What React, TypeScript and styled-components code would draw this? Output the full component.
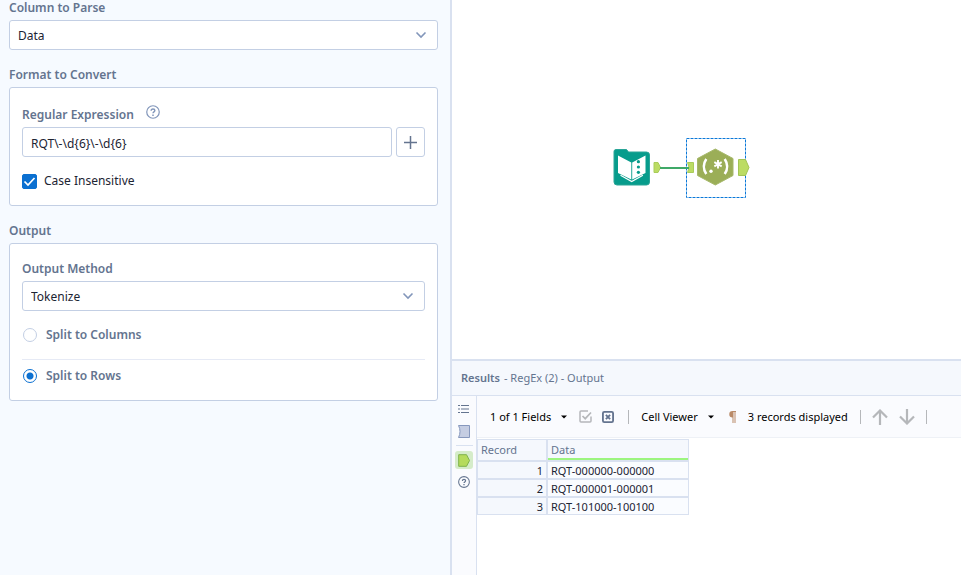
import React, { useState } from "react";
import styled, { createGlobalStyle } from "styled-components";

const Global = createGlobalStyle`
  * { box-sizing: border-box; }
  body {
    margin: 0;
    background: #ffffff;
    color: #1c2433;
    font-family: "Noto Sans", "Open Sans", sans-serif;
    font-size: 12px;
    line-height: 16px;
  }
  button, input, select { font: inherit; color: inherit; }
`;

const Page = styled.div`
  display: grid;
  grid-template-columns: minmax(0, 452fr) minmax(0, 509fr);
  min-height: 100vh;
`;

/* Configuration panel */

const ConfigPanel = styled.aside`
  display: flex;
  flex-direction: column;
  gap: 17px;
  padding: 0 12px 16px 9px;
  background: #f6faff;
  border-right: 2px solid #d9e1f0;
`;

const Section = styled.section`
  display: flex;
  flex-direction: column;
  gap: 4px;
`;

const Title = styled.label`
  color: #64748f;
  font-weight: 600;
`;

const Heading = styled.h2`
  margin: 0;
  color: #64748f;
  font-size: 12px;
  font-weight: 600;
`;

const Card = styled.div`
  display: flex;
  flex-direction: column;
  padding: 17px 12px 16px;
  background: #ffffff;
  border: 1px solid #c3cfe4;
  border-radius: 3px;
`;

const FieldHead = styled.div<{ $withHelp?: boolean }>`
  display: flex;
  align-items: flex-end;
  gap: 12px;
  height: ${(p) => (p.$withHelp ? 18 : 16)}px;
  margin-bottom: 4px;
`;

const HelpButton = styled.button`
  display: flex;
  align-self: flex-start;
  padding: 0;
  border: 0;
  background: none;
  color: #8296ba;
`;

const FieldRow = styled.div`
  display: flex;
  gap: 4px;
`;

const TextInput = styled.input`
  flex: 1;
  min-width: 0;
  height: 30px;
  padding: 2px 8px 0;
  background: #ffffff;
  border: 1px solid #c3cfe4;
  border-radius: 3px;
`;

const AddButton = styled.button`
  display: flex;
  align-items: center;
  justify-content: center;
  width: 29px;
  height: 30px;
  padding: 0;
  background: #ffffff;
  border: 1px solid #c3cfe4;
  border-radius: 3px;
  color: #64748f;
`;

const SelectWrap = styled.div`
  display: grid;
  align-items: center;
  > * { grid-area: 1 / 1; }
  > svg { justify-self: end; margin-right: 11px; pointer-events: none; }
`;

const SelectInput = styled.select`
  appearance: none;
  width: 100%;
  height: 30px;
  padding: 2px 32px 0 8px;
  background: #ffffff;
  border: 1px solid #c3cfe4;
  border-radius: 3px;
`;

const CheckLabel = styled.label`
  display: flex;
  align-items: center;
  gap: 7px;
  margin-top: 16px;
`;

const CheckMark = styled.span`
  display: grid;
  > * { grid-area: 1 / 1; }
  > svg { pointer-events: none; }
`;

const CheckInput = styled.input`
  appearance: none;
  width: 15px;
  height: 15px;
  margin: 0;
  background: #ffffff;
  border: 1px solid #c3cfe4;
  border-radius: 2px;
  &:checked { background: #0b70d1; border-color: #0b70d1; }
`;

const RadioLabel = styled.label`
  display: flex;
  align-items: center;
  gap: 9px;
  padding-left: 1px;
  color: #64748f;
  font-weight: 600;
`;

const RadioInput = styled.input`
  appearance: none;
  width: 14px;
  height: 14px;
  margin: 0;
  background: #ffffff;
  border: 1px solid #c3cfe4;
  border-radius: 50%;
  &:checked {
    border-color: #0b70d1;
    background: radial-gradient(circle, #0b70d1 3px, #ffffff 4px);
  }
`;

const RadioGroup = styled.div`
  display: flex;
  flex-direction: column;
  padding-top: 16px;
`;

const Divider = styled.hr`
  width: 100%;
  height: 1px;
  margin: 16px 0 8px;
  border: 0;
  background: #e6eaf5;
`;

/* Workspace */

const Workspace = styled.main`
  display: grid;
  grid-template-rows: minmax(0, 359fr) minmax(0, 216fr);
  min-width: 0;
`;

const Canvas = styled.div`
  position: relative;
  background: #ffffff;
`;

const ToolNode = styled.div<{ $x: number; $y: number }>`
  position: absolute;
  left: ${(p) => p.$x}px;
  top: ${(p) => p.$y}px;
  > svg { display: block; }
`;

const Results = styled.section`
  display: flex;
  flex-direction: column;
  border-top: 2px solid #d9e1f0;
`;

const ResultsHeader = styled.header`
  display: flex;
  align-items: center;
  gap: 4px;
  height: 35px;
  padding: 0 9px;
  background: #f5f8fd;
  border-bottom: 1px solid #d9e1f0;
  color: #64748f;
  font-size: 11px;
  > strong { font-weight: 600; }
`;

const ResultsBody = styled.div`
  display: grid;
  grid-template-columns: 25px minmax(0, 1fr);
  flex: 1;
`;

const Rail = styled.nav`
  display: flex;
  flex-direction: column;
  align-items: center;
  padding-top: 4px;
  background: #fafbfe;
  border-right: 1px solid #d9e1f0;
`;

const RailButton = styled.button<{ $active?: boolean }>`
  display: flex;
  align-items: center;
  justify-content: center;
  width: 18px;
  height: 18px;
  margin-bottom: 4px;
  padding: 0;
  border: 0;
  border-radius: 3px;
  background: ${(p) => (p.$active ? "#d5ecc9" : "none")};
`;

const RailDivider = styled.hr`
  width: 17px;
  height: 1px;
  margin: 1px 0 5px;
  border: 0;
  background: #d9e1f0;
`;

const Toolbar = styled.div`
  display: flex;
  align-items: center;
  height: 42px;
  padding-left: 13px;
  background: #fafbfe;
  border-bottom: 1px solid #eef1f6;
  color: #000000;
  font-size: 11px;
  white-space: nowrap;
`;

const MenuButton = styled.button`
  display: flex;
  align-items: center;
  gap: 10px;
  padding: 0;
  border: 0;
  background: none;
`;

const IconButton = styled.button`
  display: flex;
  padding: 0;
  border: 0;
  background: none;
  color: #b5b7ba;
`;

const Group = styled.div<{ $gap: number; $before: number }>`
  display: flex;
  align-items: center;
  gap: ${(p) => p.$gap}px;
  margin-left: ${(p) => p.$before}px;
`;

const Separator = styled.span`
  width: 1px;
  height: 14px;
  background: #b5b7ba;
`;

const Table = styled.table`
  width: 212px;
  margin-top: 1px;
  border-collapse: separate;
  border-spacing: 0;
  table-layout: fixed;
  font-size: 11px;
`;

const HeadCell = styled.th<{ $typed?: boolean }>`
  width: ${(p) => (p.$typed ? "auto" : "70px")};
  height: 22px;
  padding: 0 3px;
  background: #f5f8fd;
  border: 1px solid #d9e1f0;
  box-shadow: ${(p) => (p.$typed ? "inset 0 -2px 0 #9cf57f" : "none")};
  color: #64748f;
  font-weight: 400;
  text-align: left;
`;

const Cell = styled.td<{ $index?: boolean }>`
  height: 18px;
  padding: 2px 3px 0;
  background: ${(p) => (p.$index ? "#f5f8fd" : "#fafcff")};
  border: 1px solid #d9e1f0;
  line-height: 14px;
  text-align: ${(p) => (p.$index ? "right" : "left")};
`;

const Chevron = () => (
  <svg width="12" height="8" viewBox="0 0 12 8" fill="none" stroke="#8296ba" strokeWidth="1.6">
    <path d="M1.5 1.5 6 6l4.5-4.5" />
  </svg>
);

const Caret = () => (
  <svg width="6" height="4" viewBox="0 0 6 4">
    <path d="M0 .5h6L3 3.5z" fill="#000" />
  </svg>
);

const Help = ({ color = "currentColor", size = 14 }: { color?: string; size?: number }) => (
  <svg width={size} height={size} viewBox="0 0 15 15" fill="none" stroke={color} strokeWidth="1.3">
    <circle cx="7.5" cy="7.5" r="6.700" />
    <path d="M5.500 6.200c0-2.700 4-2.500 4-.2 0 1.400-2 1.400-2 2.900" strokeWidth="1.500" />
    <path d="M7.500 10.100v1.600" strokeWidth="1.600" />
  </svg>
);

const Arrow = ({ down }: { down?: boolean }) => (
  <svg width="16" height="16" viewBox="0 0 16 16" fill="none" stroke="currentColor" strokeWidth="2.200">
    <path d={down ? "M8 0v14.500M1 7.500l7 7 7-7" : "M8 16V1.500M1 8.500l7-7 7 7"} />
  </svg>
);

const records = ["RQT-000000-000000", "RQT-000001-000001", "RQT-101000-100100"];

export default function App() {
  const [split, setSplit] = useState("rows");
  const [pattern, setPattern] = useState("RQT\\-\\d{6}\\-\\d{6}");

  return (
    <>
      <Global />
      <Page>
        <ConfigPanel>
          <Section>
            <Title htmlFor="column">Column to Parse</Title>
            <SelectWrap>
              <SelectInput id="column">
                <option>Data</option>
              </SelectInput>
              <Chevron />
            </SelectWrap>
          </Section>

          <Section>
            <Heading>Format to Convert</Heading>
            <Card>
              <FieldHead $withHelp>
                <Title htmlFor="pattern">Regular Expression</Title>
                <HelpButton aria-label="Help">
                  <Help />
                </HelpButton>
              </FieldHead>
              <FieldRow>
                <TextInput
                  id="pattern"
                  type="text"
                  value={pattern}
                  onChange={(e) => setPattern(e.target.value)}
                />
                <AddButton aria-label="Add token">
                  <svg width="13" height="13" viewBox="0 0 13 13" stroke="currentColor" strokeWidth="1.500">
                    <path d="M6.500 0v13M0 6.500h13" />
                  </svg>
                </AddButton>
              </FieldRow>
              <CheckLabel>
                <CheckMark>
                  <CheckInput type="checkbox" defaultChecked />
                  <svg width="15" height="15" viewBox="0 0 15 15" fill="none" stroke="#fff" strokeWidth="1.700">
                    <path d="M2.500 7.500 6 11l6.500-7" />
                  </svg>
                </CheckMark>
                Case Insensitive
              </CheckLabel>
            </Card>
          </Section>

          <Section>
            <Heading>Output</Heading>
            <Card>
              <FieldHead>
                <Title htmlFor="method">Output Method</Title>
              </FieldHead>
              <SelectWrap>
                <SelectInput id="method">
                  <option>Tokenize</option>
                </SelectInput>
                <Chevron />
              </SelectWrap>
              <RadioGroup role="radiogroup" aria-label="Split">
                <RadioLabel>
                  <RadioInput
                    type="radio"
                    name="split"
                    checked={split === "columns"}
                    onChange={() => setSplit("columns")}
                  />
                  Split to Columns
                </RadioLabel>
                <Divider />
                <RadioLabel>
                  <RadioInput
                    type="radio"
                    name="split"
                    checked={split === "rows"}
                    onChange={() => setSplit("rows")}
                  />
                  Split to Rows
                </RadioLabel>
              </RadioGroup>
            </Card>
          </Section>
        </ConfigPanel>

        <Workspace>
          <Canvas>
            <ToolNode $x={160} $y={136}>
              <svg width="140" height="64" viewBox="612 136 140 64">
                <path d="M654 162.500h4l2.500 5-2.500 5h-4z" fill="#bcdc64" stroke="#a9cc5a" />
                <path d="M616 149.500h10.500l2 2.500h18a3 3 0 0 1 3 3v27a3 3 0 0 1-3 3H617a3 3 0 0 1-3-3v-30.500a2 2 0 0 1 2-2z" fill="#079c8c" stroke="#2aa597" />
                <path d="m618 155.500 13.300 7V179.500L618 173zM645.500 155.500l-13.300 7V179.500l13.300-6.500z" fill="#fff" />
                <path d="m620.500 175.200 11.200 6.300 11.200-6.300" fill="none" stroke="#fff" strokeWidth="1.300" />
                <g fill="#079c8c">
                  <circle cx="638.400" cy="161.700" r="1.600" />
                  <circle cx="638.400" cy="167" r="1.600" />
                  <circle cx="638.400" cy="172.300" r="1.600" />
                </g>
                <rect x="686.500" y="138.500" width="59" height="59" fill="none" stroke="#0b78d8" strokeDasharray="3 1" />
                <path d="M687.500 162.500h6v10h-6l1.500-5z" fill="#bcdc64" stroke="#a9cc5a" />
                <path d="M660 168h29" stroke="#3fa968" strokeWidth="2" />
                <path d="m715.300 149 17.700 9.500v17L715.300 185l-17.800-9.500v-17z" fill="#9bae57" stroke="#a6b86a" />
                <path d="M706.300 159q-5 7.500 0 15M724.700 159q5 7.500 0 15" fill="none" stroke="#fff" strokeWidth="2.500" />
                <circle cx="711" cy="171.300" r="1.700" fill="#fff" />
                <path d="M718 160v8.400M714.300 162.100l7.400 4.200M721.700 162.100l-7.400 4.200" stroke="#fff" strokeWidth="1.900" />
                <path d="M738.500 159.500h7l3.500 8-3.500 8h-7z" fill="#bcdc64" stroke="#a3c455" />
              </svg>
            </ToolNode>
          </Canvas>

          <Results>
            <ResultsHeader>
              <strong>Results</strong>
              <span>- RegEx (2) - Output</span>
            </ResultsHeader>
            <ResultsBody>
              <Rail>
                <RailButton aria-label="Messages">
                  <svg width="12" height="10" viewBox="0 0 12 10" stroke="#64748f">
                    <path d="M0 1.500h2M3 1.500h8M0 5h2M3 5h8M0 8.500h2M3 8.500h8" />
                  </svg>
                </RailButton>
                <RailButton aria-label="Input">
                  <svg width="12" height="13" viewBox="0 0 12 13" fill="#c5cde2" stroke="#8798bd">
                    <path d="M.5.500h11v12H.5c2-3.800 2-8.200 0-12z" />
                  </svg>
                </RailButton>
                <RailDivider />
                <RailButton aria-label="Output" $active>
                  <svg width="12" height="13" viewBox="0 0 12 13" fill="#b5db5c" stroke="#7fb24a">
                    <path d="M.7.7h7.800l3 5.800-3 5.800H.7z" />
                  </svg>
                </RailButton>
                <RailButton aria-label="Help">
                  <Help color="#64748f" size={12} />
                </RailButton>
              </Rail>
              <div>
                <Toolbar>
                  <MenuButton>
                    1 of 1 Fields <Caret />
                  </MenuButton>
                  <Group $gap={10} $before={12}>
                    <IconButton aria-label="Select all">
                      <svg width="13" height="13" viewBox="0 0 13 13" fill="none" stroke="currentColor" strokeWidth="1.500">
                        <path d="M9 1H2a1 1 0 0 0-1 1v9a1 1 0 0 0 1 1h9a1 1 0 0 0 1-1V6.500" />
                        <path d="m3.500 6 2.700 2.700L12 2.500" strokeWidth="1.700" />
                      </svg>
                    </IconButton>
                    <IconButton aria-label="Clear selection">
                      <svg width="12" height="12" viewBox="0 0 13 13" fill="none" stroke="#64748f" strokeWidth="2">
                        <rect x="1" y="1" width="11" height="11" rx="1.500" />
                        <path d="m4.200 4.200 4.600 4.600M8.800 4.200 4.200 8.800" />
                      </svg>
                    </IconButton>
                  </Group>
                  <Group $gap={12} $before={14}>
                    <Separator />
                    <MenuButton>
                      Cell Viewer <Caret />
                    </MenuButton>
                  </Group>
                  <Group $gap={12} $before={15}>
                    <IconButton aria-label="Show whitespace">
                      <svg width="7" height="12" viewBox="0 0 7 12">
                        <path d="M3.500 0H7v1H6.500v11h-1V1h-1v11h-1V6.500A3 3 0 0 1 3.500 0z" fill="#b98a68" />
                      </svg>
                    </IconButton>
                    <span>3 records displayed</span>
                  </Group>
                  <Group $gap={11} $before={12}>
                    <Separator />
                    <IconButton aria-label="Previous">
                      <Arrow />
                    </IconButton>
                    <IconButton aria-label="Next">
                      <Arrow down />
                    </IconButton>
                    <Separator />
                  </Group>
                </Toolbar>
                <Table>
                  <thead>
                    <tr>
                      <HeadCell>Record</HeadCell>
                      <HeadCell $typed>Data</HeadCell>
                    </tr>
                  </thead>
                  <tbody>
                    {records.map((value, i) => (
                      <tr key={value}>
                        <Cell $index>{i + 1}</Cell>
                        <Cell>{value}</Cell>
                      </tr>
                    ))}
                  </tbody>
                </Table>
              </div>
            </ResultsBody>
          </Results>
        </Workspace>
      </Page>
    </>
  );
}
